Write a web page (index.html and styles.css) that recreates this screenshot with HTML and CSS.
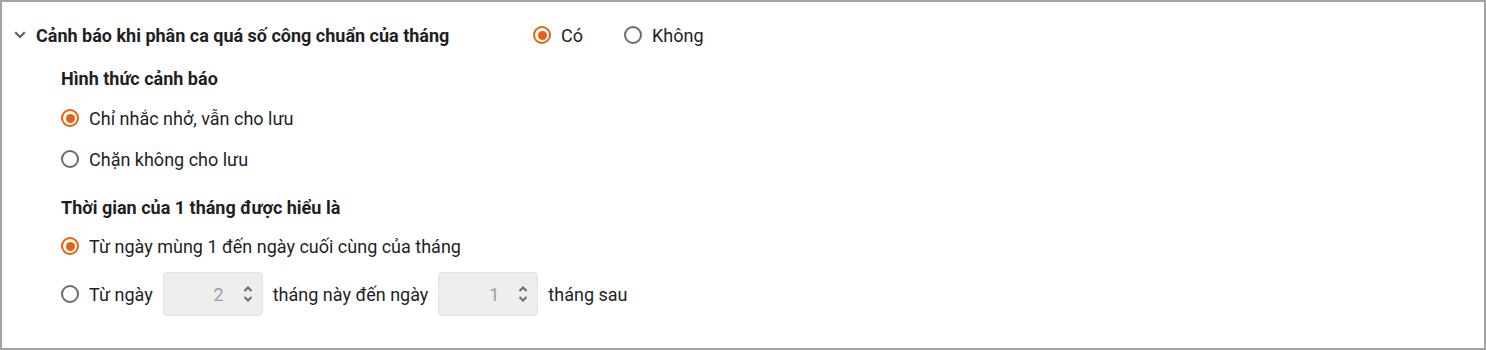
FILE: index.html
```html
<!DOCTYPE html>
<html lang="vi">
<head>
    <meta charset="UTF-8">
    <meta name="viewport" content="width=device-width, initial-scale=1.0">
    <title>Cảnh báo phân ca</title>
    <link rel="stylesheet" href="styles.css">
</head>
<body>
    <div class="panel">
        <div class="header">
            <svg class="chevron" width="12" height="8" viewBox="0 0 12 8">
                <path d="M1.2 1.2 L6 6 L10.8 1.2" fill="none" stroke="#616161" stroke-width="2.2"/>
            </svg>
            <div class="title">Cảnh báo khi phân ca quá số công chuẩn của tháng</div>
            <label class="option inline"><span class="radio checked"></span>Có</label>
            <label class="option inline"><span class="radio"></span>Không</label>
        </div>

        <div class="content">
            <div class="group-title">Hình thức cảnh báo</div>
            <label class="option"><span class="radio checked"></span>Chỉ nhắc nhở, vẫn cho lưu</label>
            <label class="option second"><span class="radio"></span>Chặn không cho lưu</label>

            <div class="group-title group-next">Thời gian của 1 tháng được hiểu là</div>
            <label class="option"><span class="radio checked"></span>Từ ngày mùng 1 đến ngày cuối cùng của tháng</label>
            <div class="option range">
                <span class="radio"></span>
                <span>Từ ngày</span>
                <div class="spin">
                    <span class="spin-value">2</span>
                    <svg class="spin-arrows" width="10" height="18" viewBox="0 0 10 18">
                        <path d="M1.5 6 L5 2.5 L8.5 6 M1.5 12 L5 15.5 L8.5 12" fill="none" stroke="#6b6b6b" stroke-width="2"/>
                    </svg>
                </div>
                <span>tháng này đến ngày</span>
                <div class="spin">
                    <span class="spin-value">1</span>
                    <svg class="spin-arrows" width="10" height="18" viewBox="0 0 10 18">
                        <path d="M1.5 6 L5 2.5 L8.5 6 M1.5 12 L5 15.5 L8.5 12" fill="none" stroke="#6b6b6b" stroke-width="2"/>
                    </svg>
                </div>
                <span>tháng sau</span>
            </div>
        </div>
    </div>
</body>
</html>
```

FILE: styles.css
```css
body {
    margin: 0;
    font-family: Roboto, "Liberation Sans", Arial, sans-serif;
    font-size: 18px;
    color: #1f1f1f;
    background: #fff;
}
.panel {
    box-sizing: border-box;
    width: 1486px;
    height: 350px;
    border: 2px solid #a3a3a3;
    padding-top: 13px;
}
.header {
    display: flex;
    align-items: center;
    height: 40px;
    padding-left: 12px;
}
.chevron {
    margin-right: 10px;
}
.title {
    width: 497px;
    font-weight: 700;
}
.option {
    display: flex;
    align-items: center;
    height: 38px;
    gap: 10px;
}
.option.inline {
    height: 40px;
    margin-right: 41px;
}
.radio {
    box-sizing: border-box;
    width: 18px;
    height: 18px;
    border: 2px solid #6b6b6b;
    border-radius: 50%;
    display: flex;
    align-items: center;
    justify-content: center;
    flex-shrink: 0;
}
.radio.checked {
    border-color: #e5620e;
}
.radio.checked::after {
    content: "";
    width: 9px;
    height: 9px;
    border-radius: 50%;
    background: #e5620e;
}
.content {
    padding-left: 59px;
    padding-top: 4px;
}
.group-title {
    height: 40px;
    line-height: 40px;
    font-weight: 700;
}
.option.second {
    margin-top: 3px;
}
.group-next {
    height: 38px;
    line-height: 38px;
    margin-top: 11px;
}
.option.range {
    height: 44px;
    margin-top: 7px;
}
.spin {
    box-sizing: border-box;
    width: 100px;
    height: 44px;
    background: #eeeeee;
    border: 1px solid #e3e3e3;
    border-radius: 4px;
    display: flex;
    align-items: center;
    justify-content: flex-end;
    padding-right: 9px;
}
.spin-value {
    color: #9e9e9e;
    margin-right: 19px;
}
```
